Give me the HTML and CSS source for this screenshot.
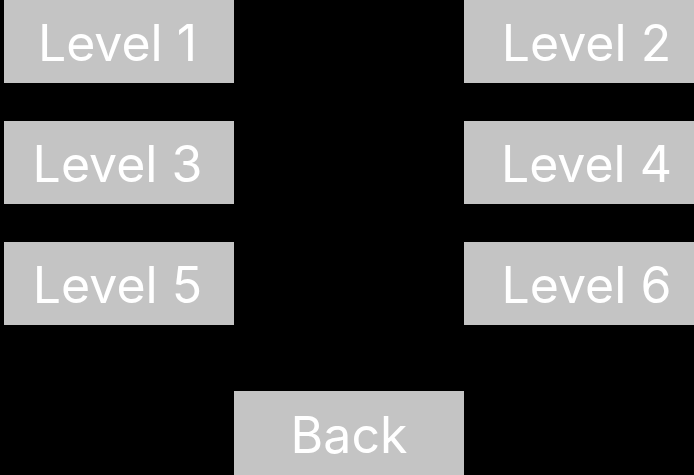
FILE: index.html
```html
<!DOCTYPE html>
<html lang="en">
<head>
    <meta charset="UTF-8">
    <meta name="viewport" content="width=device-width, initial-scale=1.0">
    <title>Levels</title>
    <link rel="stylesheet" href="styles.css">
</head>
<body>
    <div class="menu">
        <div class="levels">
            <button class="btn">Level 1</button>
            <button class="btn right">Level 2</button>
            <button class="btn">Level 3</button>
            <button class="btn right">Level 4</button>
            <button class="btn">Level 5</button>
            <button class="btn right">Level 6</button>
        </div>
        <button class="btn back">Back</button>
    </div>
</body>
</html>
```

FILE: styles.css
```css
*{
    margin: 0;
    padding: 0;
    box-sizing: border-box;
}
html,body{
    background-color: #000;
    height: 100%;
    overflow: hidden;
}
.menu{
    padding-left: 4px;
    display: flex;
    flex-direction: column;
}
.levels{
    display: grid;
    grid-template-columns: 230px 230px 230px;
    grid-auto-rows: 83px;
    row-gap: 38px;
}
.btn{
    width: 230px;
    height: 83px;
    border: none;
    background-color: #c4c4c4;
    color: #fff;
    font-family: Inter, "Liberation Sans", sans-serif;
    font-size: 50px;
    font-weight: 400;
    display: flex;
    align-items: center;
    justify-content: center;
    padding-top: 3px;
    padding-right: 3px;
}
/* right column runs past the window edge */
.right{
    grid-column: 3;
    width: 248px;
}
.back{
    margin-top: 66px;
    margin-left: 230px;
    height: 84px;
    padding-right: 0;
}
```
